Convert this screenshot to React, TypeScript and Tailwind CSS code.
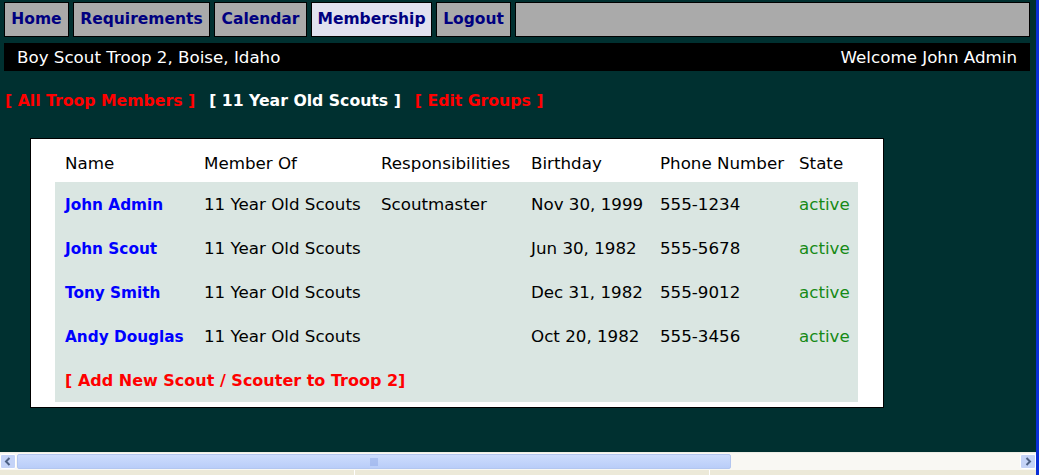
import React from "react";

const tabs = [
  { label: "Home", w: "w-[65px]" },
  { label: "Requirements", w: "w-[137px]" },
  { label: "Calendar", w: "w-[93px]" },
  { label: "Membership", w: "w-[121px]", active: true },
  { label: "Logout", w: "w-[75px]" },
];

const members = [
  { name: "John Admin", group: "11 Year Old Scouts", resp: "Scoutmaster", birthday: "Nov 30, 1999", phone: "555-1234" },
  { name: "John Scout", group: "11 Year Old Scouts", resp: "", birthday: "Jun 30, 1982", phone: "555-5678" },
  { name: "Tony Smith", group: "11 Year Old Scouts", resp: "", birthday: "Dec 31, 1982", phone: "555-9012" },
  { name: "Andy Douglas", group: "11 Year Old Scouts", resp: "", birthday: "Oct 20, 1982", phone: "555-3456" },
];

const App = () => {
  return (
    <div className="flex h-[475px] w-[1039px] overflow-hidden bg-[#003030] font-['DejaVu_Sans',sans-serif]">
      <div className="flex flex-1 flex-col">
        <div className="flex-1">
          {/* top tabs */}
          <div className="flex gap-[4px] pl-[4px] pr-[6px] pt-[2px]">
            {tabs.map((t) => (
              <div
                key={t.label}
                className={`flex h-[35px] items-center justify-center border border-black pt-[1px] text-[15.5px] font-bold text-[#000080] ${t.w} ${
                  t.active ? "bg-[#e1e1ef]" : "bg-[#aaaaaa]"
                }`}
              >
                {t.label}
              </div>
            ))}
            <div className="h-[35px] flex-1 border border-black bg-[#aaaaaa]"></div>
          </div>

          {/* header bar */}
          <div className="ml-[4px] mr-[6px] mt-[6px] flex h-[28px] items-center justify-between bg-black px-[13px] pt-[1px] text-[16.7px] text-white">
            <span>Boy Scout Troop 2, Boise, Idaho</span>
            <span>Welcome John Admin</span>
          </div>

          {/* group links */}
          <div className="mt-[18px] flex gap-[14px] pl-[5px] text-[15.7px] font-bold">
            <span className="text-[#ff0000]">[ All Troop Members ]</span>
            <span className="text-white">[ 11 Year Old Scouts ]</span>
            <span className="text-[#ff0000]">[ Edit Groups ]</span>
          </div>

          {/* members panel */}
          <div className="ml-[30px] mt-[25px] w-[854px] border border-black bg-white pb-[5px] pl-[24px] pr-[25px] pt-[6px] text-[16.7px] text-black">
            <table className="w-[803px] table-fixed border-collapse">
              <colgroup>
                <col className="w-[139px]" />
                <col className="w-[177px]" />
                <col className="w-[150px]" />
                <col className="w-[129px]" />
                <col className="w-[139px]" />
                <col className="w-[69px]" />
              </colgroup>
              <thead>
                <tr className="h-[37px] text-left">
                  <th className="pl-[10px] pt-[1px] font-normal">Name</th>
                  <th className="pl-[10px] pt-[1px] font-normal">Member Of</th>
                  <th className="pl-[10px] pt-[1px] font-normal">Responsibilities</th>
                  <th className="pl-[10px] pt-[1px] font-normal">Birthday</th>
                  <th className="pl-[10px] pt-[1px] font-normal whitespace-nowrap">Phone Number</th>
                  <th className="pl-[10px] pt-[1px] font-normal">State</th>
                </tr>
              </thead>
              <tbody className="bg-[#dae6e2]">
                {members.map((m) => (
                  <tr key={m.name} className="h-[44px]">
                    <td className="pl-[10px] pt-[4px] text-[15.3px] font-bold whitespace-nowrap text-[#0000ff]">{m.name}</td>
                    <td className="pl-[10px] pt-[2px] whitespace-nowrap">{m.group}</td>
                    <td className="pl-[10px] pt-[2px]">{m.resp}</td>
                    <td className="pl-[10px] pt-[2px] whitespace-nowrap">{m.birthday}</td>
                    <td className="pl-[10px] pt-[2px]">{m.phone}</td>
                    <td className="pl-[10px] pt-[2px] text-[#168a16]">active</td>
                  </tr>
                ))}
                <tr className="h-[44px]">
                  <td colSpan={6} className="pl-[10px] pt-[3px] text-[16px] font-bold text-[#ff0000]">
                    [ Add New Scout / Scouter to Troop 2]
                  </td>
                </tr>
              </tbody>
            </table>
          </div>
        </div>

        {/* horizontal scrollbar */}
        <div className="flex h-[18px] items-stretch border-t border-[#eeede5] bg-[#f9f8f3] py-[1px]">
          <div className="flex w-[16px] items-center justify-center rounded-[2px] border border-white bg-[#c4d3f7]">
            <svg width="8" height="9" viewBox="0 0 8 9">
              <path d="M5.5 1 L2 4.5 L5.5 8" fill="none" stroke="#4d6185" strokeWidth="2" />
            </svg>
          </div>
          <div className="ml-[1px] flex w-[714px] items-center justify-center rounded-[2px] border border-[#b3c6f0] bg-gradient-to-b from-[#cddcfd] to-[#b9cdf8]">
            <svg width="9" height="8" viewBox="0 0 9 8">
              <path d="M1 0v8M3 0v8M5 0v8M7 0v8" stroke="#8fa8e6" strokeWidth="1" />
            </svg>
          </div>
          <div className="flex-1"></div>
          <div className="flex w-[16px] items-center justify-center rounded-[2px] border border-white bg-[#c4d3f7]">
            <svg width="8" height="9" viewBox="0 0 8 9">
              <path d="M2.5 1 L6 4.5 L2.5 8" fill="none" stroke="#4d6185" strokeWidth="2" />
            </svg>
          </div>
        </div>
        <div className="flex h-[5px] bg-[#ece9d8]">
          <div className="w-[355px] border-r border-white"></div>
          <div className="w-[355px] border-r border-white"></div>
        </div>
      </div>
      <div className="w-[3px] bg-[#0a2fd6]"></div>
    </div>
  );
};

export default App;
